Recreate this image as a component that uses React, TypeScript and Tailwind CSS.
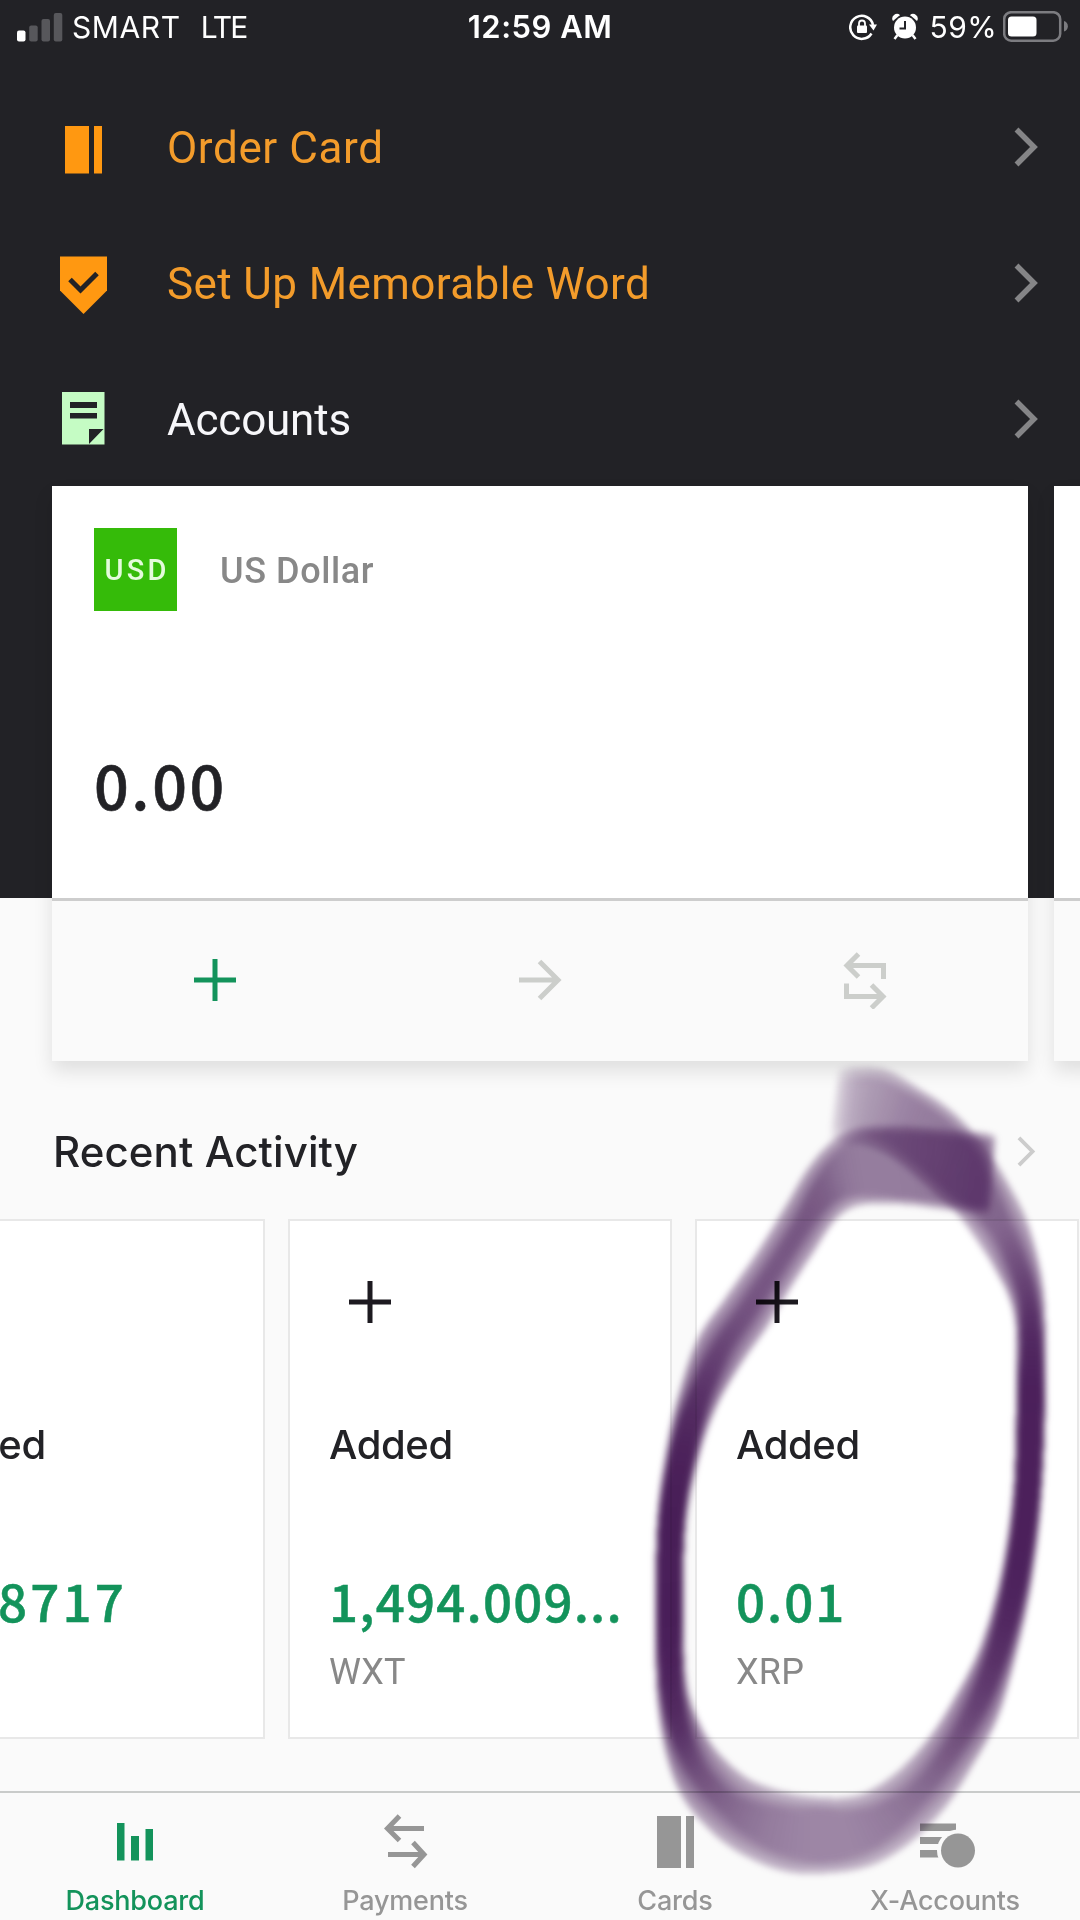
import React from 'react';

type MenuItem = {
  label: string;
  icon: React.ReactNode;
  className: string;
};

type Activity = {
  id: number;
  title: string;
  amount: string;
  currency: string;
  amountClass?: string;
};

type Tab = {
  label: string;
  icon: React.ReactNode;
  active?: boolean;
};

const CardIcon = () => (
  <svg width="48" height="60" viewBox="0 0 48 60" fill="#ff9811">
    <path d="M5 8h24v47.500H5zM34 8h8v47.500h-8z" />
  </svg>
);

const ShieldIcon = () => (
  <svg width="48" height="60" viewBox="0 0 48 60">
    <path d="M0 2.500h47v34L23.500 60 0 36.500z" fill="#ff9811" />
    <path d="M10 25.500l10.500 10.500 16.500-16.500" fill="none" stroke="#222226" strokeWidth="5" />
  </svg>
);

const NoteIcon = () => (
  <svg width="48" height="60" viewBox="0 0 48 60">
    <path d="M2 2h42.500v52.500H2z" fill="#c5fcc4" />
    <path d="M10 12h27v6H10zM10 23h27v5.500H10zM29 39h14.500L29 54z" fill="#222226" />
  </svg>
);

const Chevron = ({ className, size, stroke }: { className: string; size: number; stroke: number }) => (
  <svg className={className} width={size * 0.65} height={size} viewBox="0 0 26 40" fill="none" stroke="currentColor" strokeWidth={stroke}>
    <path d="M2.500 2.500L20 20 2.500 37.500" />
  </svg>
);

const Plus = ({ className }: { className: string }) => (
  <svg className={className} width="42" height="42" viewBox="0 0 42 42" stroke="currentColor" strokeWidth="5">
    <path d="M21 0v42M0 21h42" />
  </svg>
);

const menu: MenuItem[] = [
  { label: 'Order Card', icon: <CardIcon />, className: 'text-[#f39c2b] tracking-[0.6px]' },
  { label: 'Set Up Memorable Word', icon: <ShieldIcon />, className: 'text-[#f39c2b] tracking-[0.4px]' },
  { label: 'Accounts', icon: <NoteIcon />, className: 'text-[#f7f7fa] tracking-[-0.2px]' },
];

const activities: Activity[] = [
  { id: 1, title: 'Added', amount: '8717', currency: '', amountClass: 'ml-[76px] tracking-[3.2px]' },
  { id: 2, title: 'Added', amount: '1,494.009...', currency: 'WXT' },
  { id: 3, title: 'Added', amount: '0.01', currency: 'XRP', amountClass: 'tracking-[2px]' },
];

const tabs: Tab[] = [
  {
    label: 'Dashboard',
    active: true,
    icon: <path d="M14 13h7.500v37.500H14zM28 26h8v24.500h-8zM42.500 19h7.500v31.500h-7.500z" fill="currentColor" />,
  },
  {
    label: 'Payments',
    icon: (
      <path
        d="M51 18.500H16M26.500 6L14.500 18.500l12 12M15 44.500h35M40 32.500l11 12-11 12"
        fill="none"
        stroke="currentColor"
        strokeWidth="5"
      />
    ),
  },
  {
    label: 'Cards',
    icon: <path d="M14 6h24v52H14zM43 6h8v52h-8z" fill="currentColor" />,
  },
  {
    label: 'X-Accounts',
    icon: (
      <>
        <path d="M7 13.500h36v7.500H7zM7 27h25v7H7zM7 40h20v7.500H7z" fill="currentColor" />
        <circle cx="45" cy="40.500" r="21" fill="#fafafa" />
        <circle cx="45" cy="40.500" r="17" fill="currentColor" />
      </>
    ),
  },
];

const StatusBar = () => (
  <div className="flex h-[54px] items-center pl-[17px] pr-[12px] font-[Inter,sans-serif] text-[30px] text-white">
    <div className="flex flex-1 items-center">
      <svg width="46" height="30" viewBox="0 0 46 30">
        <rect x="0" y="18.500" width="8.500" height="11" rx="2" fill="#fff" />
        <rect x="12.200" y="13.500" width="8.500" height="16" rx="2" fill="#57575b" />
        <rect x="24.500" y="7" width="8.500" height="22.500" rx="2" fill="#57575b" />
        <rect x="36.800" y="1" width="8.500" height="28.500" rx="2" fill="#57575b" />
      </svg>
      <span className="ml-[9px] tracking-[0.6px]">SMART</span>
      <span className="ml-[20px] tracking-[-2px]">LTE</span>
    </div>
    <span className="-ml-[5px] text-[31px] font-semibold tracking-[0.5px]">12:59 AM</span>
    <div className="flex flex-1 items-center justify-end">
      <svg className="mr-[15px]" width="28" height="28" viewBox="0 0 28 28" fill="none">
        <path d="M22.500 20.500A11.500 11.500 0 1 1 24 12" stroke="#fff" strokeWidth="2.500" />
        <path d="M20 11.500h8l-3.500 6z" fill="#fff" />
        <rect x="8" y="12.500" width="10" height="7.500" rx="1" fill="#fff" />
        <path d="M10 13v-2.500a3 3 0 0 1 6 0V13" stroke="#fff" strokeWidth="1.800" />
      </svg>
      <svg className="mr-[12px]" width="26" height="28" viewBox="0 0 26 28">
        <circle cx="13" cy="14.500" r="11" fill="#fff" />
        <path d="M1.500 7.500a4 4 0 0 1 6-5M24.500 7.500a4 4 0 0 0-6-5" fill="#fff" stroke="#fff" strokeWidth="1.500" />
        <path d="M5.500 22l-3 4M20.500 22l3 4" stroke="#fff" strokeWidth="2.500" />
        <path d="M13 8v7.500H7.500" fill="none" stroke="#222226" strokeWidth="2" />
      </svg>
      <span className="text-[30px] tracking-[0.4px]">59%</span>
      <svg className="ml-[6px]" width="65" height="32" viewBox="0 0 65 32">
        <rect x="1.200" y="1.200" width="56" height="28.500" rx="7" fill="none" stroke="#7c7c80" strokeWidth="2.500" />
        <rect x="5" y="5.500" width="28.500" height="20" rx="3.500" fill="#fff" />
        <path d="M61 10a5.500 5.500 0 0 1 0 10.500z" fill="#7c7c80" />
      </svg>
    </div>
  </div>
);

const ActivityCard = ({ activity }: { activity: Activity }) => (
  <div className="flex h-[520px] w-[384px] shrink-0 flex-col border-2 border-[#e8e8e8] bg-white pl-[39px] pt-[60px]">
    <Plus className="ml-[20px] text-[#1d1a20]" />
    <div className="mt-[92px] font-[Inter,sans-serif] text-[40px] font-medium leading-[60px] tracking-[-0.4px] text-[#222226]">
      {activity.title}
    </div>
    <div className="mt-[95px] font-['Noto_Sans_CJK_SC',sans-serif] text-[51px] font-medium leading-[60px] tracking-[1.2px] text-[#13935b] [-webkit-text-stroke:0.5px_#13935b]">
      <span className={activity.amountClass}>{activity.amount}</span>
    </div>
    <div className="mt-[18px] text-[36px] leading-[48px] tracking-[0.3px] text-[#888888]">{activity.currency}</div>
  </div>
);

// outer x, outer y, inner x, inner y, opacity, edge softness
type Rib = [number, number, number, number, number, number];

const ribs: Rib[] = [
  [838, 1070, 830, 1137, 0.1, 0.2],
  [846, 1068, 838, 1142, 0.26, 0.2],
  [860, 1067, 850, 1144, 0.38, 0.18],
  [887, 1070, 866, 1146, 0.46, 0.18],
  [917, 1087, 892, 1158, 0.54, 0.15],
  [947, 1107, 917, 1178, 0.58, 0.16],
  [970, 1129, 937, 1196, 0.62, 0.16],
  [993, 1158, 957, 1214, 0.65, 0.22],
  [1021, 1207, 977, 1241, 0.68, 0.35],
  [1034, 1242, 993, 1266, 0.76, 0.35],
  [1043, 1285, 1010, 1300, 0.86, 0.3],
  [1046, 1333, 1016, 1333, 0.94, 0.2],
  [1046, 1385, 1016, 1385, 0.98, 0.12],
  [1045, 1440, 1015, 1440, 0.98, 0.12],
  [1042, 1495, 1013, 1490, 0.98, 0.12],
  [1037, 1545, 1007, 1540, 0.98, 0.15],
  [1028, 1603, 996, 1595, 0.96, 0.2],
  [1013, 1667, 978, 1652, 0.9, 0.28],
  [997, 1720, 953, 1700, 0.82, 0.36],
  [973, 1765, 927, 1740, 0.72, 0.38],
  [945, 1808, 898, 1771, 0.63, 0.38],
  [910, 1843, 868, 1791, 0.57, 0.3],
  [873, 1865, 845, 1797, 0.53, 0.22],
  [833, 1873, 823, 1797, 0.52, 0.18],
  [787, 1872, 796, 1794, 0.54, 0.22],
  [743, 1855, 768, 1787, 0.6, 0.3],
  [707, 1828, 743, 1775, 0.68, 0.38],
  [680, 1793, 717, 1751, 0.78, 0.38],
  [665, 1750, 698, 1720, 0.9, 0.3],
  [657, 1698, 687, 1685, 0.96, 0.2],
  [655, 1640, 684, 1635, 0.99, 0.12],
  [655, 1573, 684, 1570, 0.99, 0.12],
  [658, 1507, 688, 1507, 0.99, 0.12],
  [668, 1440, 702, 1446, 0.96, 0.2],
  [680, 1390, 719, 1402, 0.9, 0.3],
  [698, 1338, 744, 1360, 0.82, 0.38],
  [725, 1298, 768, 1326, 0.76, 0.38],
  [757, 1252, 792, 1286, 0.74, 0.38],
  [783, 1210, 814, 1252, 0.74, 0.38],
  [808, 1168, 833, 1223, 0.7, 0.3],
  [833, 1140, 850, 1209, 0.6, 0.2],
  [860, 1128, 872, 1204, 0.56, 0.12],
  [900, 1126, 910, 1205, 0.57, 0.1],
  [950, 1130, 950, 1210, 0.6, 0.1],
  [984, 1133, 982, 1213, 0.6, 0.1],
  [996, 1136, 990, 1213, 0.3, 0.12],
];

const LANES = 14;
const STEPS = 6;

// Catmull-Rom between neighbouring ribs
const spline = (a: number, b: number, c: number, d: number, t: number) =>
  0.5 * (2 * b + (c - a) * t + (2 * a - 5 * b + 4 * c - d) * t * t + (3 * b - a - 3 * c + d) * t * t * t);

const sampleRibs = () => {
  const out: number[][] = [];
  for (let i = 0; i < ribs.length - 1; i++) {
    const p0 = ribs[Math.max(i - 1, 0)];
    const p1 = ribs[i];
    const p2 = ribs[i + 1];
    const p3 = ribs[Math.min(i + 2, ribs.length - 1)];
    for (let s = 0; s < STEPS; s++) {
      out.push(p1.map((_, k) => spline(p0[k], p1[k], p2[k], p3[k], s / STEPS)));
    }
  }
  out.push([...ribs[ribs.length - 1]]);
  return out;
};

const Marker = () => {
  const samples = sampleRibs();
  const quads: React.ReactNode[] = [];
  for (let i = 0; i < samples.length - 1; i++) {
    const [ox, oy, ix, iy, alpha, soft] = samples[i];
    const [px, py, qx, qy] = samples[i + 1];
    for (let l = 0; l < LANES; l++) {
      const a = l / LANES;
      const b = (l + 1) / LANES;
      const mid = (a + b) / 2;
      const edge = Math.min(1, Math.min(mid, 1 - mid) / soft);
      const points = [
        [ox + (ix - ox) * a, oy + (iy - oy) * a],
        [ox + (ix - ox) * b, oy + (iy - oy) * b],
        [px + (qx - px) * b, py + (qy - py) * b],
        [px + (qx - px) * a, py + (qy - py) * a],
      ];
      quads.push(
        <polygon
          key={`${i}-${l}`}
          points={points.map((p) => p.map((n) => n.toFixed(1)).join(',')).join(' ')}
          fillOpacity={(alpha * (0.45 + 0.55 * edge)).toFixed(3)}
        />
      );
    }
  }
  return (
    <svg
      className="pointer-events-none absolute left-0 top-0 mix-blend-multiply"
      width="1080"
      height="1920"
      viewBox="0 0 1080 1920"
    >
      <defs>
        <filter id="marker-soft" x="600" y="1000" width="480" height="920" filterUnits="userSpaceOnUse" colorInterpolationFilters="sRGB">
          <feGaussianBlur stdDeviation="3" />
        </filter>
      </defs>
      <g fill="#481c58" filter="url(#marker-soft)" shapeRendering="crispEdges">
        {quads}
      </g>
    </svg>
  );
};

const App: React.FC = () => {
  return (
    <div className="relative flex h-[1920px] w-[1080px] flex-col overflow-hidden bg-[#fafafa] font-[Roboto,sans-serif]">
      <header className="h-[486px] shrink-0 bg-[#222226]">
        <StatusBar />
        <div className="pt-[26px]">
          {menu.map((item) => (
            <div key={item.label} className="flex h-[136px] items-center pl-[60px] pr-[40px]">
              {item.icon}
              <span className={`ml-[59px] flex-1 text-[44px] leading-[60px] ${item.className}`}>{item.label}</span>
              <Chevron className="mb-[2px] text-[#858587]" size={40} stroke={5.5} />
            </div>
          ))}
        </div>
      </header>

      <section className="flex h-[575px] shrink-0 gap-[26px] bg-[linear-gradient(#222226_412px,#fafafa_412px)] pl-[52px]">
        <div className="flex w-[976px] shrink-0 flex-col shadow-[0_10px_18px_rgba(0,0,0,0.11)]">
          <div className="h-[412px] bg-white pl-[42px] pt-[42px]">
            <div className="flex items-center">
              <div className="flex h-[83px] w-[83px] items-center justify-center bg-[#35bb09] pl-[3px] pt-[2px] text-[29px] font-medium tracking-[3.2px] text-[#e4fbdc]">
                USD
              </div>
              <span className="ml-[43px] pt-[3px] text-[36px] font-medium tracking-[0.6px] text-[#888888]">US Dollar</span>
            </div>
            <div className="mt-[138px] font-['Noto_Sans_CJK_SC',sans-serif] text-[61px] font-medium leading-[70px] tracking-[2.6px] text-[#222226] [-webkit-text-stroke:0.6px_#222226]">
              0.00
            </div>
          </div>
          <div className="grid flex-1 grid-cols-3 place-items-center border-t-[3px] border-[#cdcdcd] bg-[#fafafa] pb-[3px]">
            <Plus className="text-[#13935b]" />
            <svg width="44" height="44" viewBox="0 0 44 44" fill="none" stroke="#cccecb" strokeWidth="5">
              <path d="M1 22h38M21.500 3.500L40 22 21.500 40.500" />
            </svg>
            <svg width="44" height="58" viewBox="0 0 44 58" fill="none" stroke="#cccecb" strokeWidth="5">
              <path d="M40.500 28V14.500H5M15.500 3L4 14.500 15.500 26M3.500 32.500V45.500H38M28.500 34L40 45.500 28.500 57" />
            </svg>
          </div>
        </div>
        <div className="flex w-[976px] shrink-0 flex-col shadow-[0_10px_18px_rgba(0,0,0,0.11)]">
          <div className="h-[412px] bg-white" />
          <div className="flex-1 border-t-[3px] border-[#cdcdcd] bg-[#fafafa]" />
        </div>
      </section>

      <div className="flex h-[158px] shrink-0 items-center pl-[53px] pr-[43px] pt-[23px]">
        <span className="flex-1 font-[Inter,sans-serif] text-[42px] font-medium tracking-[0.1px] text-[#222226]">
          Recent Activity
        </span>
        <Chevron className="text-[#cccccc]" size={31} stroke={5} />
      </div>

      <div className="-ml-[119px] flex shrink-0 gap-[23px]">
        {activities.map((activity) => (
          <ActivityCard key={activity.id} activity={activity} />
        ))}
      </div>

      <nav className="mt-auto grid h-[129px] shrink-0 grid-cols-4 border-t-2 border-[#c9cbca] bg-[#fafafa]">
        {tabs.map((tab) => (
          <div
            key={tab.label}
            className={`flex flex-col items-center pt-[17px] ${tab.active ? 'text-[#13935b]' : 'text-[#969696]'}`}
          >
            <svg width="64" height="60" viewBox="0 0 64 60">
              {tab.icon}
            </svg>
            <span className="mt-[13px] font-[Inter,sans-serif] text-[27px] font-medium leading-[36px] tracking-[-0.2px]">
              {tab.label}
            </span>
          </div>
        ))}
      </nav>

      <Marker />
    </div>
  );
};

export default App;
